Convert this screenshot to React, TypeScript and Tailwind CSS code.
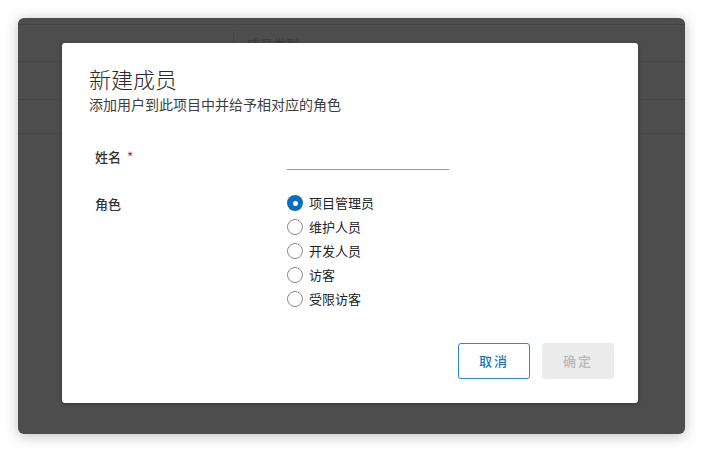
import { useState } from 'react';

const roles = ['项目管理员', '维护人员', '开发人员', '访客', '受限访客'];

function Radio({ checked }: { checked: boolean }) {
  if (checked) {
    return (
      <span className="flex h-4 w-4 items-center justify-center rounded-full bg-[#0a6fb8]">
        <span className="h-[5px] w-[5px] rounded-full bg-white" />
      </span>
    );
  }
  return <span className="h-4 w-4 rounded-full border border-[#8a8a8a] bg-white" />;
}

export default function App() {
  const [role, setRole] = useState(0);
  const [name, setName] = useState('');

  return (
    <div
      className="flex h-[452px] w-[703px] bg-white p-[18px] pr-[18px]"
      style={{ fontFamily: '"Noto Sans CJK SC", "Noto Sans", sans-serif' }}
    >
      <div className="relative h-[416px] w-[667px] overflow-hidden rounded-[6px] bg-[#4d4d4d] shadow-[0_2px_14px_rgba(0,0,0,0.25)]">
        {/* dimmed table underneath */}
        <div className="flex flex-col">
          <div className="h-[7px] border-b border-[#454545]" />
          <div className="flex h-[37px] border-b border-[#454545]">
            <div className="w-[215px]" />
            <div className="mt-[6px] h-[12px] border-l border-[#454545]" />
            <div className="pl-[13px] pt-[11px] text-[13px] leading-[16px] text-[#3c3c3c]">成员类型</div>
          </div>
          <div className="h-[38px] border-b border-[#454545]" />
          <div className="h-[34px] border-b border-[#454545]" />
        </div>

        {/* modal */}
        <div className="absolute left-[44px] top-[25px] flex h-[360px] w-[576px] flex-col rounded-[3px] bg-white pb-[24px] pl-[27px] pr-[24px] pt-[21px] shadow-[0_1px_4px_rgba(0,0,0,0.3)]">
          <h1 className="text-[22px] font-light leading-[28px] text-[#2b2b2b]">新建成员</h1>
          <p className="mt-[2px] text-[14px] leading-[20px] text-[#3d3d3d]">添加用户到此项目中并给予相对应的角色</p>

          <div className="mt-[34px] flex pl-[6px]">
            <div className="w-[192px] text-[13px] font-medium leading-[18px] text-[#333]">
              姓名 <span className="ml-[3px] text-[#d0342c]">*</span>
            </div>
            <input
              value={name}
              onChange={(e) => setName(e.target.value)}
              className="h-[22px] w-[162px] border-b border-[#9a9a9a] text-[13px] text-[#333] outline-none"
            />
          </div>

          <div className="mt-[24px] flex pl-[6px]">
            <div className="w-[192px] pt-[1px] text-[13px] font-medium leading-[18px] text-[#333]">角色</div>
            <div className="-mt-[3px] flex flex-col">
              {roles.map((r, i) => (
                <button
                  key={r}
                  onClick={() => setRole(i)}
                  className="flex h-[24px] items-center gap-[6px] text-left text-[13px] text-[#222]"
                >
                  <Radio checked={role === i} />
                  <span>{r}</span>
                </button>
              ))}
            </div>
          </div>

          <div className="mt-auto flex justify-end gap-[12px]">
            <button className="h-[36px] w-[72px] rounded-[3px] border border-[#2f86c8] text-[13px] font-medium tracking-[2px] text-[#1b74b8]">
              取消
            </button>
            <button className="h-[36px] w-[72px] rounded-[3px] bg-[#ebebeb] text-[13px] font-medium tracking-[2px] text-[#b9b9b9]">
              确定
            </button>
          </div>
        </div>
      </div>
    </div>
  );
}
